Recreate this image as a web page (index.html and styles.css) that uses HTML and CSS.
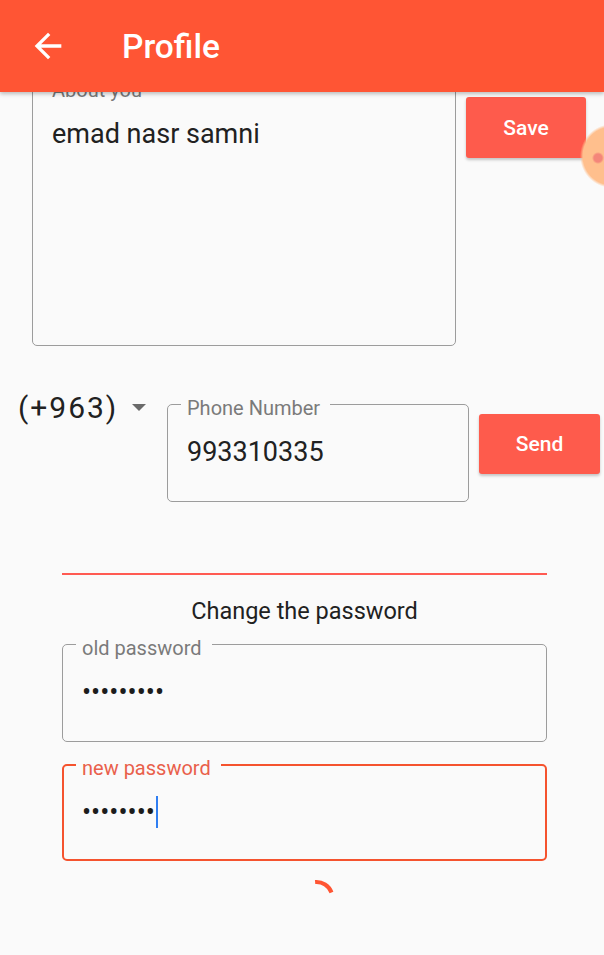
FILE: index.html
```html
<!DOCTYPE html>
<html lang="en">
<head>
<meta charset="utf-8">
<title>Profile</title>
<link rel="stylesheet" href="styles.css">
</head>
<body>
<header class="appbar">
  <svg class="back" viewBox="0 0 24 24" aria-hidden="true"><path d="M20 11H7.83l5.59-5.59L12 4l-8 8 8 8 1.41-1.41L7.83 13H20v-2z"/></svg>
  <h1 class="title">Profile</h1>
</header>
<main class="content">
  <section class="about-row">
    <div class="field about">
      <span class="label">About you</span>
      <div class="value">emad nasr samni</div>
    </div>
    <button class="btn save">Save</button>
  </section>
  <section class="phone-row">
    <div class="code">
      <span class="code-text">(+963)</span>
      <svg class="caret" viewBox="0 0 14 7" aria-hidden="true"><polygon points="0,0 14,0 7,7"/></svg>
    </div>
    <div class="field phone">
      <span class="label">Phone Number</span>
      <div class="value">993310335</div>
    </div>
    <button class="btn send">Send</button>
  </section>
  <section class="password">
    <div class="divider"></div>
    <h2 class="pw-title">Change the password</h2>
    <div class="field pw">
      <span class="label">old password</span>
      <div class="value dots">•••••••••</div>
    </div>
    <div class="field pw focused">
      <span class="label">new password</span>
      <div class="value dots">••••••••<span class="cursor"></span></div>
    </div>
    <svg class="spinner" viewBox="0 0 60 40" aria-hidden="true"><path d="M40.1 12.1 A16 16 0 0 1 56.5 22.5"/></svg>
  </section>
</main>
<div class="bubble"></div>
</body>
</html>
```
FILE: styles.css
```css
html, body {
  margin: 0;
  padding: 0;
  overflow: hidden;
  background: #fafafa;
  font-family: Roboto, "Noto Sans", "Liberation Sans", sans-serif;
  color: #212121;
}

.appbar {
  position: relative;
  z-index: 2;
  height: 92px;
  background: #ff5534;
  display: flex;
  align-items: center;
  box-shadow: 0 2px 4px rgba(0, 0, 0, 0.25);
}

.back {
  width: 40px;
  height: 40px;
  margin-left: 28px;
  fill: #ffffff;
  flex: none;
}

.title {
  margin: 0 0 0 54px;
  padding-top: 2px;
  font-size: 33.5px;
  line-height: 38px;
  font-weight: 500;
  color: #ffffff;
}

.content {
  margin-top: -6px;
}

.field {
  position: relative;
  box-sizing: border-box;
  border: 1px solid #9c9c9c;
  border-radius: 5px;
  flex: none;
}

.label {
  position: absolute;
  top: -9px;
  left: 13px;
  padding: 0 10px 0 6px;
  background: #fafafa;
  font-size: 20px;
  line-height: 24px;
  color: #7a7a7a;
  white-space: nowrap;
}

.value {
  padding: 31px 0 0 19px;
  font-size: 27px;
  line-height: 32px;
  color: #212121;
  white-space: nowrap;
}

.about-row {
  display: flex;
  align-items: flex-start;
  padding-left: 32px;
}

.about {
  width: 424px;
  height: 260px;
}

.btn {
  flex: none;
  border: none;
  border-radius: 3px;
  background: #fe5b4c;
  color: #ffffff;
  font-family: Roboto, "Noto Sans", "Liberation Sans", sans-serif;
  font-size: 21px;
  font-weight: 500;
  box-shadow: 0 2px 3px rgba(0, 0, 0, 0.22);
  padding: 0;
}

.save {
  width: 120px;
  height: 61px;
  margin: 11px 0 0 10px;
}

.phone-row {
  display: flex;
  align-items: flex-start;
  margin-top: 45px;
  padding-left: 18px;
}

.code {
  width: 128px;
  display: flex;
  justify-content: space-between;
  align-items: flex-start;
  flex: none;
}

.code-text {
  font-size: 30px;
  line-height: 34px;
  letter-spacing: 2px;
  color: #212121;
}

.caret {
  width: 14px;
  height: 7px;
  margin-top: 13px;
  fill: #6a6a6a;
}

.phone {
  width: 302px;
  height: 98px;
  margin: 13px 0 0 21px;
}

.send {
  width: 121px;
  height: 60px;
  margin: 23px 0 0 10px;
}

.password {
  margin: 71px 57px 0 62px;
}

.divider {
  height: 2px;
  background: #ff5a52;
}

.pw-title {
  margin: 22px 0 0;
  font-size: 23.5px;
  line-height: 28px;
  font-weight: 400;
  text-align: center;
  color: #212121;
}

.pw {
  height: 98px;
  margin-top: 19px;
}

.pw + .pw {
  margin-top: 22px;
  height: 97px;
}

.dots {
  color: #1c1c1c;
}

.focused {
  border: 2px solid #f5532e;
}

.focused .label {
  top: -10px;
  left: 12px;
  color: #e9604b;
}

.focused .value {
  padding: 30px 0 0 18px;
}

.cursor {
  display: inline-block;
  width: 2px;
  height: 32px;
  vertical-align: top;
  background: #2f7ef2;
  margin-left: 1px;
}

.spinner {
  display: block;
  width: 60px;
  height: 40px;
  margin: 9px auto 0;
  fill: none;
  stroke: #ff5533;
  stroke-width: 4;
}

.bubble {
  position: absolute;
  left: 580px;
  top: 124px;
  width: 24px;
  height: 64px;
  z-index: 1;
  background:
    radial-gradient(circle 6px at 18px 34px, #f4867a 4px, rgba(244, 134, 122, 0) 6px),
    radial-gradient(circle 32px at 32px 32px, #ffbf8d 29px, rgba(255, 191, 141, 0) 32px);
}
```
